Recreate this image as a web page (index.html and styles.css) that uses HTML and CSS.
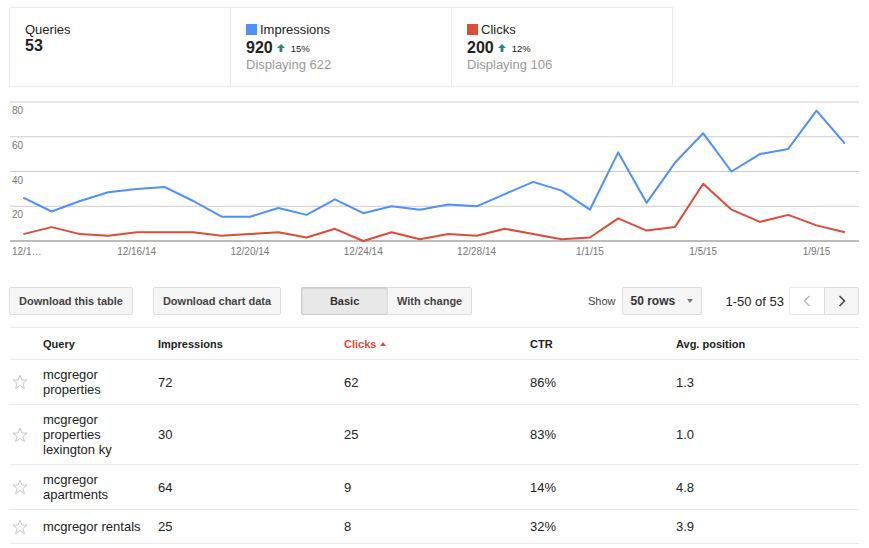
FILE: index.html
```html
<!DOCTYPE html>
<html lang="en">
<head>
  <meta charset="UTF-8">
  <meta name="viewport" content="width=device-width, initial-scale=1.0">
  <title>Search Queries</title>
  <link rel="stylesheet" href="styles.css">
</head>
<body>
  <div class="page">
    <div class="totals">
      <div class="total">
        <div class="total-label">Queries</div>
        <div class="total-value">53</div>
      </div>
      <div class="total">
        <div class="total-label"><span class="swatch swatch-blue"></span>Impressions</div>
        <div class="total-value">920
          <svg class="up" width="8" height="8" viewBox="0 0 8 8"><path d="M4 0 L8 4 H5.4 V8 H2.6 V4 H0 Z"/></svg>
          <span class="change">15%</span>
        </div>
        <div class="total-sub">Displaying 622</div>
      </div>
      <div class="total last">
        <div class="total-label"><span class="swatch swatch-red"></span>Clicks</div>
        <div class="total-value">200
          <svg class="up" width="8" height="8" viewBox="0 0 8 8"><path d="M4 0 L8 4 H5.4 V8 H2.6 V4 H0 Z"/></svg>
          <span class="change">12%</span>
        </div>
        <div class="total-sub">Displaying 106</div>
      </div>
    </div>

    <svg id="grafico" class="chart" width="850" height="178" viewBox="9 87 850 178"></svg>

    <div class="toolbar">
      <button class="btn">Download this table</button>
      <button class="btn">Download chart data</button>
      <div class="toggle">
        <button class="btn active">Basic</button>
        <button class="btn">With change</button>
      </div>
      <div class="paging">
        <span class="show">Show</span>
        <button class="btn select">50 rows <span class="caret"></span></button>
        <span class="range">1-50 of 53</span>
        <div class="pager">
          <button class="page-btn disabled">
            <svg width="8" height="12" viewBox="0 0 8 12"><path d="M6.5 1 L1.5 6 L6.5 11"/></svg>
          </button>
          <button class="page-btn">
            <svg width="8" height="12" viewBox="0 0 8 12"><path d="M1.5 1 L6.5 6 L1.5 11"/></svg>
          </button>
        </div>
      </div>
    </div>

    <table class="queries">
      <colgroup>
        <col style="width:34px">
        <col style="width:115px">
        <col style="width:186px">
        <col style="width:186px">
        <col style="width:146px">
        <col>
      </colgroup>
      <thead>
        <tr>
          <th></th>
          <th>Query</th>
          <th>Impressions</th>
          <th class="sorted">Clicks <span class="sort-up"></span></th>
          <th>CTR</th>
          <th>Avg. position</th>
        </tr>
      </thead>
      <tbody id="linhas"></tbody>
    </table>
  </div>

  <script>
    const impressoes = [25, 17, 23, 28, 30, 31, 23, 14, 14, 19, 15, 24, 16, 20, 18,
                        21, 20, 27, 34, 29, 18, 51, 22, 45, 62, 40, 50, 53, 75, 56];
    const cliques = [4, 8, 4, 3, 5, 5, 5, 3, 4, 5, 2, 7, 0, 5, 1,
                     4, 3, 7, 4, 1, 2, 13, 6, 8, 33, 18, 11, 15, 9, 5];
    const datas = {4: '12/16/14', 8: '12/20/14', 12: '12/24/14', 16: '12/28/14',
                   20: '1/1/15', 24: '1/5/15', 28: '1/9/15'};

    const consultas = [
      { q: 'mcgregor properties', imp: 72, cli: 62, ctr: '86%', pos: '1.3' },
      { q: 'mcgregor properties lexington ky', imp: 30, cli: 25, ctr: '83%', pos: '1.0' },
      { q: 'mcgregor apartments', imp: 64, cli: 9, ctr: '14%', pos: '4.8' },
      { q: 'mcgregor rentals', imp: 25, cli: 8, ctr: '32%', pos: '3.9' }
    ];

    // chart area in page coordinates
    const base = 241, topo = 102, maximo = 80;
    const x0 = 23.3, passo = 28.33;
    const py = v => base - v * (base - topo) / maximo;
    const px = i => x0 + passo * i;

    function desenharGrafico() {
      const svg = document.getElementById('grafico');
      let html = '';
      [80, 60, 40, 20].forEach(v => {
        const y = py(v);
        html += `<line class="grid" x1="10" x2="859" y1="${y}" y2="${y}"/>`;
        html += `<text class="axis-label" x="12" y="${y + 12}">${v}</text>`;
      });
      html += `<line class="axis" x1="10" x2="859" y1="${base}" y2="${base}"/>`;
      html += `<text class="axis-label" x="12" y="255">12/1…</text>`;
      Object.keys(datas).forEach(i => {
        html += `<text class="axis-label" x="${px(i)}" y="255" text-anchor="middle">${datas[i]}</text>`;
      });
      const linha = (dados, cls) =>
        `<polyline class="${cls}" points="${dados.map((v, i) => px(i).toFixed(1) + ',' + py(v).toFixed(1)).join(' ')}"/>`;
      html += linha(cliques, 'serie-cliques');
      html += linha(impressoes, 'serie-impressoes');
      svg.innerHTML = html;
    }

    function desenharTabela() {
      const corpo = document.getElementById('linhas');
      corpo.innerHTML = '';
      consultas.forEach(item => {
        const tr = document.createElement('tr');
        tr.innerHTML = `
          <td class="star-cell">
            <svg class="star" width="16" height="16" viewBox="0 0 16 16"><path d="M8 1.2 L9.9 6 L15 6.2 L11 9.4 L12.4 14.5 L8 11.6 L3.6 14.5 L5 9.4 L1 6.2 L6.1 6 Z"/></svg>
          </td>
          <td class="query">${item.q}</td>
          <td>${item.imp}</td>
          <td>${item.cli}</td>
          <td>${item.ctr}</td>
          <td>${item.pos}</td>
        `;
        corpo.appendChild(tr);
      });
    }

    desenharGrafico();
    desenharTabela();
  </script>
</body>
</html>
```

FILE: styles.css
```css
body {
  margin: 0;
  font-family: Arial, "Liberation Sans", sans-serif;
  color: #222;
  background-color: #fff;
}

.page {
  width: 850px;
  padding: 7px 10px 0 9px;
}

/* totals across the top */
.totals {
  display: flex;
  border-bottom: 1px solid #ebebeb;
}

.total {
  width: 221px;
  height: 79px;
  box-sizing: border-box;
  border-top: 1px solid #ebebeb;
  border-left: 1px solid #ebebeb;
  padding: 14px 15px 0;
}

.total.last {
  width: 222px;
  border-right: 1px solid #ebebeb;
}

.total-label {
  font-size: 13px;
  line-height: 15px;
  display: flex;
  align-items: center;
}

.swatch {
  display: inline-block;
  width: 11px;
  height: 11px;
  margin-right: 3px;
}

.swatch-blue {
  background-color: #4d90fe;
}

.swatch-red {
  background-color: #dd4b39;
}

.total-value {
  font-size: 16px;
  line-height: 17px;
  font-weight: bold;
  display: flex;
  align-items: center;
}

.up {
  fill: #2e8380;
  margin: 1px 6px 0 4px;
}

.change {
  font-size: 9.5px;
  font-weight: normal;
  margin-top: 3px;
}

.total-sub {
  font-size: 13px;
  line-height: 15px;
  color: #999;
}

/* chart */
.chart {
  display: block;
}

.chart .grid {
  stroke: #ccc;
  stroke-width: 1;
}

.chart .axis {
  stroke: #777;
  stroke-width: 1;
}

.chart .axis-label {
  font-family: Arial, "Liberation Sans", sans-serif;
  font-size: 10px;
  fill: #777;
}

.serie-impressoes,
.serie-cliques {
  fill: none;
  stroke-width: 2;
  stroke-linejoin: round;
}

.serie-impressoes {
  stroke: #4d90fe;
}

.serie-cliques {
  stroke: #dd4b39;
}

/* buttons row */
.toolbar {
  display: flex;
  align-items: center;
  gap: 20px;
  margin-top: 22px;
}

.btn {
  height: 28px;
  box-sizing: border-box;
  padding: 0 9px;
  font-family: Arial, "Liberation Sans", sans-serif;
  font-size: 11px;
  font-weight: bold;
  color: #444;
  background-color: #f5f5f5;
  border: 1px solid #dcdcdc;
  border-radius: 2px;
  white-space: nowrap;
}

.toggle {
  display: flex;
}

.toggle .btn {
  width: 85px;
  padding: 0;
  border-radius: 0;
}

.toggle .btn:first-child {
  width: 86px;
  border-right: none;
  border-radius: 2px 0 0 2px;
}

.toggle .btn:last-child {
  border-radius: 0 2px 2px 0;
}

.toggle .active {
  background-color: #e8e8e8;
  border-color: #ccc;
  box-shadow: inset 0 1px 2px rgba(0, 0, 0, 0.1);
  color: #333;
}

.paging {
  margin-left: auto;
  display: flex;
  align-items: center;
}

.show {
  font-size: 11px;
  color: #444;
  margin-right: 7px;
}

.select {
  width: 80px;
  font-size: 12px;
  color: #333;
  text-align: left;
  padding: 0 7px;
  display: flex;
  align-items: center;
  justify-content: space-between;
}

.caret {
  width: 0;
  height: 0;
  border-left: 3.5px solid transparent;
  border-right: 3.5px solid transparent;
  border-top: 4px solid #777;
  margin-right: 1px;
}

.range {
  font-size: 13px;
  margin: 0 5px 0 23px;
}

.pager {
  display: flex;
}

.page-btn {
  width: 35px;
  height: 28px;
  box-sizing: border-box;
  display: flex;
  align-items: center;
  justify-content: center;
  background-color: #f5f5f5;
  border: 1px solid #dcdcdc;
  border-radius: 0 2px 2px 0;
  padding: 0;
}

.page-btn svg {
  fill: none;
  stroke: #444;
  stroke-width: 1.6;
}

.page-btn.disabled {
  background-color: #fff;
  border-color: #ebebeb;
  border-right: none;
  border-radius: 2px 0 0 2px;
}

.page-btn.disabled svg {
  stroke: #bbb;
}

/* query table */
.queries {
  width: 850px;
  border-collapse: collapse;
  table-layout: fixed;
  margin-top: 12px;
}

.queries th {
  height: 31px;
  padding: 0;
  font-size: 11px;
  font-weight: bold;
  text-align: left;
  border-top: 1px solid #ebebeb;
  border-bottom: 1px solid #ebebeb;
}

.queries th.sorted {
  color: #dd4b39;
}

.sort-up {
  display: inline-block;
  width: 0;
  height: 0;
  border-left: 3.5px solid transparent;
  border-right: 3.5px solid transparent;
  border-bottom: 4px solid #dd4b39;
  vertical-align: 2px;
  margin-left: 1px;
}

.queries td {
  height: 19px;
  padding: 7px 0;
  font-size: 13px;
  line-height: 15px;
  border-bottom: 1px solid #ebebeb;
}

.queries td.query {
  padding-right: 8px;
}

.star-cell svg {
  display: block;
  margin-left: 3px;
  fill: none;
  stroke: #c8c8c8;
  stroke-width: 1;
}
```
